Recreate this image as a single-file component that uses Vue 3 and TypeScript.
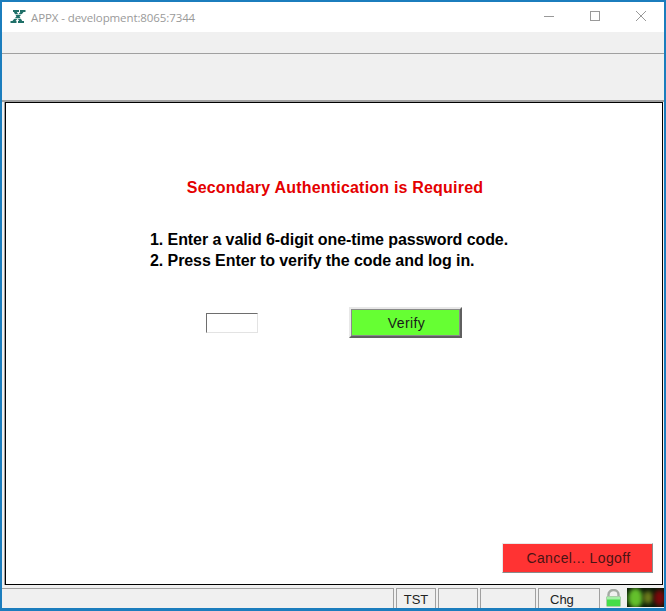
<script setup lang="ts">
const cells: { label: string; width: number; cls: string }[] = [
  { label: 'TST', width: 40, cls: '' },
  { label: '', width: 40, cls: '' },
  { label: '', width: 56, cls: '' },
  { label: 'Chg', width: 62, cls: 'left' },
]
</script>

<template>
  <div class="window">
    <header class="titlebar">
      <svg class="logo" width="16" height="13" viewBox="0 0 16 13">
        <path d="M5 1.500l6 10M12.500 1.500l-9 10" stroke="#1f6f68" stroke-width="2.600" fill="none"/>
        <path d="M3 1h6M10 1h5.500M.5 12h6M8 12h6" stroke="#1f6f68" stroke-width="1.800" fill="none"/>
        <path d="M0 4.500h16M0 8.500h16" stroke="#fff" stroke-width=".7"/>
      </svg>
      <span class="title">APPX - development:8065:7344</span>
      <div class="controls">
        <svg width="12" height="12" viewBox="0 0 12 12"><path d="M1 6.500h10" stroke="#999" fill="none"/></svg>
        <svg width="12" height="12" viewBox="0 0 12 12"><rect x="1.500" y="1.500" width="9" height="9" stroke="#999" fill="none"/></svg>
        <svg width="12" height="12" viewBox="0 0 12 12"><path d="M1 1l10 10M11 1L1 11" stroke="#999" fill="none"/></svg>
      </div>
    </header>
    <div class="menubar"></div>
    <div class="toolbar"></div>
    <main class="pane">
      <h1 class="heading">Secondary Authentication is Required</h1>
      <ol class="steps">
        <li>1. Enter a valid 6-digit one-time password code.</li>
        <li>2. Press Enter to verify the code and log in.</li>
      </ol>
      <div class="form">
        <input class="code" type="text" />
        <button class="verify" type="button">Verify</button>
      </div>
      <div class="footer">
        <button class="cancel" type="button">Cancel... Logoff</button>
      </div>
    </main>
    <footer class="status">
      <div class="status-fill"></div>
      <div v-for="(c, i) in cells" :key="i" class="cell" :class="c.cls" :style="{ width: c.width + 'px' }">{{ c.label }}</div>
      <svg class="lock" width="17" height="18" viewBox="0 0 17 18">
        <path d="M3.500 8V5.500a5 4.500 0 0 1 10 0V8" fill="none" stroke="#a3aaa3" stroke-width="2.400"/>
        <rect x="1.500" y="7.500" width="14" height="10" rx="1" fill="#45dd48" stroke="#a9cfa9"/>
        <rect x="2" y="8" width="13" height="2.500" fill="#a6f0a8"/>
      </svg>
      <div class="lights">
        <span class="light green"></span>
        <span class="light olive"></span>
        <span class="light red"></span>
      </div>
    </footer>
  </div>
</template>

<style>
html, body { margin: 0; padding: 0; background: #f0f0f0; }
</style>

<style scoped>
.window {
  width: 666px;
  height: 611px;
  box-sizing: border-box;
  border: 2px solid #1b7dbd;
  border-bottom-width: 3px;
  background: #f0f0f0;
  display: flex;
  flex-direction: column;
  overflow: hidden;
  font-family: "Liberation Sans", Arial, sans-serif;
}
.titlebar {
  height: 30px;
  flex: none;
  background: #fff;
  display: flex;
  align-items: center;
  padding-left: 8px;
}
.logo { flex: none; margin-top: -1px; }
.title {
  margin-left: 5px;
  font-family: "Open Sans", "Noto Sans", sans-serif;
  font-size: 11.500px;
  letter-spacing: -0.1px;
  color: #9a9a9a;
}
.controls {
  margin-left: auto;
  display: flex;
  gap: 34px;
  padding-right: 17px;
  margin-top: -2px;
}
.controls svg { display: block; }
.menubar {
  height: 21px;
  flex: none;
  border-bottom: 1px solid #a0a0a0;
}
.toolbar {
  height: 46px;
  flex: none;
  border-bottom: 2px solid #a0a0a0;
}
.pane {
  flex: none;
  height: 483px;
  box-sizing: border-box;
  margin: 0 1px 0 3px;
  background: #fff;
  border: 1px solid #000;
  box-shadow: -1px 0 0 #a0a0a0;
  display: flex;
  flex-direction: column;
  color: #000;
}
.heading {
  margin: 75px 0 0;
  padding-left: 2px;
  font-size: 16px;
  line-height: 20px;
  font-weight: bold;
  letter-spacing: 0.2px;
  color: #e40000;
  text-align: center;
}
.steps {
  list-style: none;
  margin: 31px 0 0 144px;
  padding: 0;
  font-size: 16px;
  font-weight: bold;
  letter-spacing: -0.08px;
  line-height: 21px;
}
.form {
  display: flex;
  align-items: center;
  margin: 36px 0 0 200px;
}
.code {
  width: 52px;
  height: 20px;
  box-sizing: border-box;
  padding: 0;
  background: #fff;
  border: 1px solid;
  border-color: #6e6e6e #e3e3e3 #e3e3e3 #6e6e6e;
  outline: none;
}
.verify {
  margin-left: 91px;
  width: 113px;
  height: 31px;
  box-sizing: border-box;
  padding: 0 0 0 2px;
  background: #66ff33;
  border: 2px solid;
  border-color: #e8e8e8 #5f5f5f #5f5f5f #e8e8e8;
  box-shadow: 0 0 0 1px #8a8a8a inset;
  font-family: inherit;
  font-size: 14px;
  letter-spacing: 0.4px;
  color: #1a1a1a;
}
.footer {
  margin-top: auto;
  padding: 0 9px 11px 0;
  display: flex;
  justify-content: flex-end;
}
.cancel {
  width: 151px;
  height: 30px;
  box-sizing: border-box;
  padding: 0 0 0 2px;
  background: #ff3333;
  border: 1px solid;
  border-color: #e8e8e8 #8a8a8a #8a8a8a #e8e8e8;
  font-family: inherit;
  font-size: 14px;
  letter-spacing: 0.4px;
  color: #4a1414;
}
.status {
  flex: 1;
  min-height: 0;
  margin-top: 3px;
  display: flex;
  gap: 2px;
  align-items: stretch;
}
.status-fill {
  flex: 1;
  border-top: 1px solid #a0a0a0;
  border-right: 1px solid #a0a0a0;
}
.cell {
  box-sizing: border-box;
  border-top: 1px solid #a0a0a0;
  border-left: 1px solid #a0a0a0;
  border-right: 1px solid #a0a0a0;
  font-size: 13px;
  line-height: 21px;
  text-align: center;
  color: #222;
}
.cell.left { text-align: left; padding-left: 11px; }
.lock { flex: none; margin: 1px 3px 0 3px; }
.lights {
  flex: none;
  width: 37px;
  height: 19px;
  background: #0a1a08;
  overflow: hidden;
  display: flex;
  align-items: center;
  padding-left: 1px;
  box-sizing: border-box;
}
.light { border-radius: 50%; display: block; flex: none; filter: blur(2px); }
.green { width: 15px; height: 20px; background: #64c02c; margin-right: 0; }
.olive { width: 10px; height: 13px; background: #6b7a1c; margin-right: 1px; }
.red { width: 11px; height: 16px; background: #7a080b; }
</style>
